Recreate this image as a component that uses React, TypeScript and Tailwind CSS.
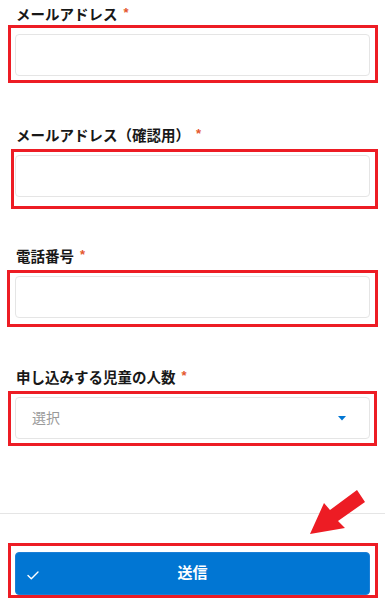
import React from "react";

const fields: { label: string; select?: boolean }[] = [
  { label: "メールアドレス" },
  { label: "メールアドレス（確認用）" },
  { label: "電話番号" },
  { label: "申し込みする児童の人数", select: true },
];

const redBoxes = [
  "left-[8px] top-[25px] w-[370px] h-[58px]",
  "left-[11px] top-[149px] w-[367px] h-[60px]",
  "left-[7px] top-[270px] w-[371px] h-[57px]",
  "left-[8px] top-[391px] w-[369px] h-[55px]",
  "left-[8px] top-[543px] w-[370px] h-[55px]",
];

export default function App() {
  return (
    <div className="relative w-[385px] h-[600px] bg-white overflow-hidden font-['Liberation_Sans','Noto_Sans_CJK_JP',sans-serif]">
      <div className="px-[15px] pt-[5px] flex flex-col gap-[50px]">
        {fields.map((f) => (
          <div key={f.label}>
            <div className="h-[20px] leading-[20px] pl-px text-[14.5px] font-bold text-[#181818] whitespace-nowrap">
              {f.label}
              <span className="ml-[6px] text-[13px] text-[#e4572e] align-top relative top-[-2px]">*</span>
            </div>
            <div className="mt-[9px] h-[42px] rounded-[4px] border border-[#e5e5e5] bg-white flex items-center justify-between pl-[16px] pr-[23px]">
              {f.select && (
                <>
                  <span className="text-[14px] text-[#9a9a9a]">選択</span>
                  <svg width="8" height="5" viewBox="0 0 8 5">
                    <polygon points="0,0 8,0 4,4.5" fill="#0176d3" />
                  </svg>
                </>
              )}
            </div>
          </div>
        ))}
      </div>
      <div className="mt-[74px] border-t border-[#e5e5e5] px-[15px] pt-[38px]">
        <button className="relative w-full h-[43px] rounded-[4px] bg-[#0176d3] border border-[#1b7fd6] flex items-center justify-center text-white text-[15px] font-bold">
          <svg className="absolute left-[11px] top-[18px]" width="12" height="9" viewBox="0 0 12 9" fill="none">
            <path d="M1 4.5 L4.3 7.8 L11 1" stroke="white" strokeWidth="1.4" strokeLinecap="round" strokeLinejoin="round" />
          </svg>
          送信
        </button>
      </div>
      {redBoxes.map((c) => (
        <div key={c} className={`absolute ${c} border-[3px] border-[#ed1c24] pointer-events-none`} />
      ))}
      <svg className="absolute left-0 top-0 pointer-events-none" width="385" height="600" viewBox="0 0 385 600">
        <polygon points="357,490 365,502 338,521 345,528 310,534 324,503 330,510" fill="#ed1c24" />
      </svg>
    </div>
  );
}
